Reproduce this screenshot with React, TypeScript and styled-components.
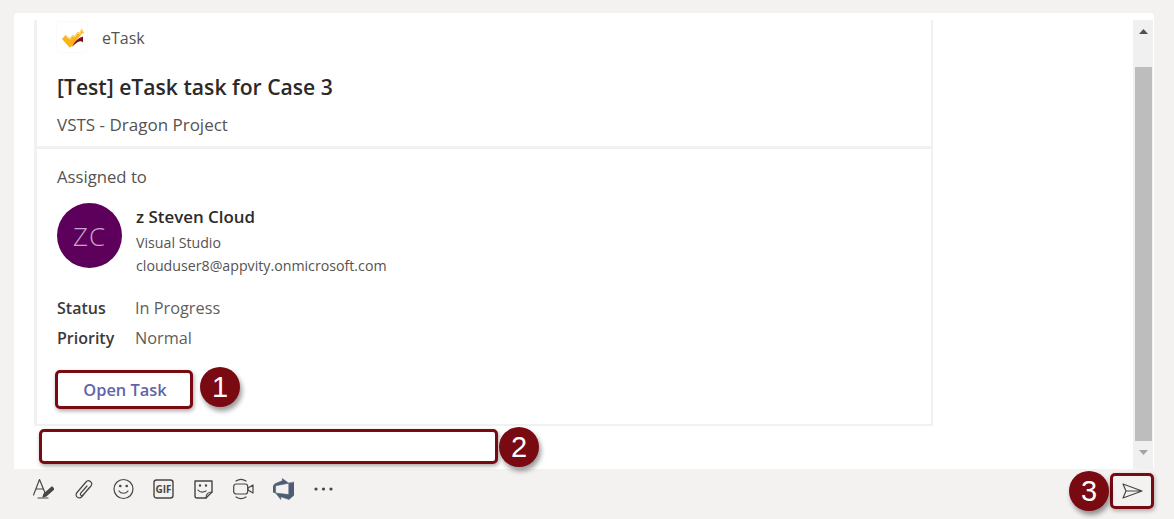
import React from "react";
import styled, { createGlobalStyle } from "styled-components";

const GlobalStyle = createGlobalStyle`
  html, body {
    margin: 0;
    padding: 0;
    background: #f3f2f1;
    font-family: "Open Sans", "Noto Sans", sans-serif;
  }
  #root {
    width: 1174px;
    height: 519px;
    overflow: hidden;
  }
`;

const Page = styled.div`
  position: relative;
  width: 1174px;
  height: 519px;
  display: flex;
  flex-direction: column;
  padding: 13px 20px 0 14px;
  box-sizing: border-box;
`;

const Panel = styled.div`
  height: 456px;
  background: #fff;
  border-radius: 4px 4px 0 0;
  display: flex;
  padding: 7px 0 0 20px;
  box-sizing: border-box;
`;

const Thread = styled.div`
  width: 899px;
  display: flex;
  flex-direction: column;
`;

const Card = styled.div`
  height: 406px;
  box-sizing: border-box;
  border-left: 3px solid #f1f1f1;
  border-right: 2px solid #f1f1f1;
  border-bottom: 2px solid #f1f1f1;
`;

const CardHead = styled.div`
  height: 129px;
  box-sizing: border-box;
  border-bottom: 3px solid #f1f1f1;
  padding: 2px 0 0 20px;
`;

const Brand = styled.div`
  display: flex;
  align-items: flex-start;
  gap: 15px;
  height: 32px;
  font-size: 16px;
  line-height: 32px;
  color: #555351;
`;

const Logo = styled.svg`
  width: 30px;
  height: 30px;
  flex: none;
  border-radius: 4px;
  box-shadow: 0 0 0 1px #fafafa;
`;

const Title = styled.div`
  margin-top: 19px;
  font-size: 21.150px;
  line-height: 28px;
  font-weight: 600;
  color: #2b2a29;
`;

const Subtitle = styled.div`
  margin-top: 13px;
  font-size: 17px;
  line-height: 22px;
  color: #555351;
`;

const CardBody = styled.div`
  padding: 17px 0 0 20px;
`;

const SectionLabel = styled.div`
  font-size: 16.700px;
  line-height: 22px;
  color: #555351;
`;

const Person = styled.div`
  display: flex;
  gap: 14px;
  margin-top: 15px;
`;

const Avatar = styled.div`
  width: 65px;
  height: 65px;
  flex: none;
  border-radius: 50%;
  background: #5c005c;
  color: #c9a5c9;
  font-size: 26px;
  font-weight: 300;
  display: flex;
  align-items: center;
  justify-content: center;
  letter-spacing: 1px;
`;

const PersonInfo = styled.div`
  display: flex;
  flex-direction: column;
  padding-top: 3px;
`;

const PersonName = styled.div`
  font-size: 16.900px;
  line-height: 22px;
  font-weight: 600;
  color: #2b2a29;
  margin-bottom: 3px;
`;

const PersonLine = styled.div`
  font-size: 14.200px;
  line-height: 23px;
  color: #555351;
`;

const Facts = styled.div`
  display: grid;
  grid-template-columns: 78px 1fr;
  grid-auto-rows: 30px;
  align-items: center;
  margin-top: 16px;
  font-size: 16px;
`;

const FactName = styled.div`
  font-weight: 600;
  color: #3b3a39;
`;

const FactValue = styled.div`
  font-size: 16.300px;
  color: #605e5c;
`;

const OpenTask = styled.div`
  width: 138px;
  height: 39px;
  margin: 17px 0 0 -2px;
  padding-left: 2px;
  box-sizing: border-box;
  border: 3px solid #7a0a12;
  border-radius: 5px;
  box-shadow: 1px 2px 4px rgba(0, 0, 0, 0.35);
  display: flex;
  align-items: center;
  justify-content: center;
  font-size: 16.400px;
  font-weight: 600;
  color: #6264a7;
  background: #fff;
`;

const ReplyBox = styled.div`
  width: 459px;
  height: 35px;
  margin: 3px 0 0 5px;
  box-sizing: border-box;
  border: 3px solid #7a0a12;
  border-radius: 5px;
  box-shadow: 1px 2px 4px rgba(0, 0, 0, 0.35);
  background: #fff;
`;

const Scrollbar = styled.div`
  width: 20px;
  margin-left: 200px;
  background: #f0f0f0;
  display: flex;
  flex-direction: column;
  align-items: center;
`;

const ScrollButton = styled.div`
  height: 20px;
  margin-top: 8px;
  display: flex;
  align-items: flex-start;
  justify-content: center;
`;

const ScrollThumb = styled.div`
  width: 17px;
  height: 376px;
  margin-top: 19px;
  background: #bdbdbd;
`;

const Arrow = styled.svg`
  width: 9px;
  height: 5px;
  margin-top: 1px;
`;

const Toolbar = styled.div`
  flex: 1;
  display: flex;
  align-items: flex-start;
  padding: 8px 0 0 19px;
  justify-content: space-between;
`;

const Tools = styled.div`
  display: flex;
  gap: 19px;
  align-items: center;
`;

const ToolIcon = styled.svg`
  width: 21px;
  height: 24px;
  fill: none;
  stroke: #484644;
  stroke-width: 1.2;
  stroke-linecap: round;
  stroke-linejoin: round;
`;

const GifLabel = styled.text`
  font-family: "Open Sans", sans-serif;
  font-size: 10px;
  font-weight: 700;
  fill: #484644;
  stroke: none;
  text-anchor: middle;
`;

const SendButton = styled.div`
  width: 44px;
  height: 36px;
  margin-top: -4px;
  box-sizing: border-box;
  border: 3px solid #7a0a12;
  border-radius: 5px;
  box-shadow: 1px 2px 4px rgba(0, 0, 0, 0.3);
  display: flex;
  align-items: center;
  justify-content: center;
`;

const Callout = styled.div<{ $x: number; $y: number }>`
  position: absolute;
  left: ${(p) => p.$x}px;
  top: ${(p) => p.$y}px;
  width: 40px;
  height: 40px;
  border-radius: 50%;
  background: #7a0a12;
  color: #fff;
  font-family: "Liberation Sans", Arial, sans-serif;
  font-size: 29px;
  display: flex;
  align-items: center;
  justify-content: center;
  box-shadow: 2px 4px 5px rgba(0, 0, 0, 0.4);
`;

export default function App() {
  return (
    <Page>
      <GlobalStyle />
      <Panel>
        <Thread>
          <Card>
            <CardHead>
              <Brand>
                <Logo viewBox="0 0 30 30">
                  <path d="M5 17l3.500-4 4 3.500 3-3.500 2 1 3-4 2 1 2-4.500 2.500 4.500-2 .5-11 13.500-1.500 .5z" fill="#fdb515" />
                  <path d="M8.500 13l4 3.500 3-3.500 2 1 3-4 2 1 2-4.500 1 2-2.500 4-2-1-3 4-2-1-3 3.500-3.500-3z" fill="#fdd36e" />
                  <path d="M15 25c2-5 6-9 11-10.500v6c-2-2.500-6-1-11 4.500z" fill="#7a0f14" />
                </Logo>
                eTask
              </Brand>
              <Title>[Test] eTask task for Case 3</Title>
              <Subtitle>VSTS - Dragon Project</Subtitle>
            </CardHead>
            <CardBody>
              <SectionLabel>Assigned to</SectionLabel>
              <Person>
                <Avatar>ZC</Avatar>
                <PersonInfo>
                  <PersonName>z Steven Cloud</PersonName>
                  <PersonLine>Visual Studio</PersonLine>
                  <PersonLine>clouduser8@appvity.onmicrosoft.com</PersonLine>
                </PersonInfo>
              </Person>
              <Facts>
                <FactName>Status</FactName>
                <FactValue>In Progress</FactValue>
                <FactName>Priority</FactName>
                <FactValue>Normal</FactValue>
              </Facts>
              <OpenTask>Open Task</OpenTask>
            </CardBody>
          </Card>
          <ReplyBox />
        </Thread>
        <Scrollbar>
          <ScrollButton>
            <Arrow viewBox="0 0 9 5">
              <path d="M4.500 0L9 5H0z" fill="#505050" />
            </Arrow>
          </ScrollButton>
          <ScrollThumb />
          <ScrollButton>
            <Arrow viewBox="0 0 9 5">
              <path d="M0 0h9L4.500 5z" fill="#a3a3a3" />
            </Arrow>
          </ScrollButton>
        </Scrollbar>
      </Panel>
      <Toolbar>
        <Tools>
          <ToolIcon viewBox="0 0 21 24">
            <path d="M0.500 18L6.500 2.500 12.500 17M3 12h7M5 21h10" />
            <path d="M10 20l1-3 8-7 2 2-8 7z" fill="#484644" />
          </ToolIcon>
          <ToolIcon viewBox="0 0 21 24">
            <path d="M16 11L9 19.500c-3 3.500-8-.5-5-4L13 5c2.500-3 7.500.5 5 4L10 18c-1.300 1.500-3.500-.2-2.300-1.800L14 9" />
          </ToolIcon>
          <ToolIcon viewBox="0 0 21 24">
            <circle cx="10.500" cy="12" r="9.500" />
            <path d="M6 14c2 3 7 3 9 0" />
            <circle cx="7.300" cy="9" r="0.700" fill="#484644" />
            <circle cx="13.700" cy="9" r="0.700" fill="#484644" />
          </ToolIcon>
          <ToolIcon viewBox="0 0 21 24">
            <rect x="1" y="3" width="19" height="18" rx="2.500" strokeWidth="1.400" />
            <GifLabel x="10.500" y="15.700">GIF</GifLabel>
          </ToolIcon>
          <ToolIcon viewBox="0 0 21 24">
            <path d="M2 4h17v11l-6 6H4c-1 0-2-1-2-2z" strokeWidth="1.400" />
            <path d="M13 21c0-3 1-6 6-6M5 13c2 2.500 5 2.500 8 1" />
            <circle cx="7" cy="8.500" r="0.600" fill="#484644" />
            <circle cx="13" cy="8.500" r="0.600" fill="#484644" />
          </ToolIcon>
          <ToolIcon viewBox="0 0 21 24">
            <rect x="0.700" y="7" width="14" height="10" rx="2.500" />
            <path d="M15 11l5-3v8l-5-3zM3 4c3-2 7-2 10 0M3 20c3 2 7 2 10 0" />
          </ToolIcon>
          <ToolIcon viewBox="0 0 24 24">
            <path
              d="M0 8.877L2.247 5.910l8.405-3.416V.022l7.370 5.393L2.966 8.338v8.225L0 15.707zm24-4.450v14.651l-5.753 4.900-9.303-3.057v3.056l-5.978-7.416 15.057 1.798V5.415z"
              fill="#4d5d75"
              stroke="#4d5d75"
              strokeWidth="0.600"
            />
          </ToolIcon>
          <ToolIcon viewBox="0 0 21 24">
            <circle cx="3" cy="12" r="1.600" fill="#484644" stroke="none" />
            <circle cx="10.500" cy="12" r="1.600" fill="#484644" stroke="none" />
            <circle cx="18" cy="12" r="1.600" fill="#484644" stroke="none" />
          </ToolIcon>
        </Tools>
        <SendButton>
          <ToolIcon viewBox="0 0 21 24">
            <path d="M1 5l19 7-19 7 3-7zM4 12h16" />
          </ToolIcon>
        </SendButton>
      </Toolbar>
      <Callout $x={200} $y={367}>1</Callout>
      <Callout $x={499} $y={427}>2</Callout>
      <Callout $x={1069} $y={471}>3</Callout>
    </Page>
  );
}
